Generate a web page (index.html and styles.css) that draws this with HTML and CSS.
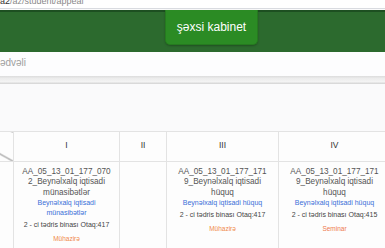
FILE: index.html
```html
<!DOCTYPE html>
<html lang="az">
<head>
    <meta charset="UTF-8">
    <meta name="viewport" content="width=device-width, initial-scale=1.0">
    <title>Dərs cədvəli</title>
    <link rel="stylesheet" href="styles.css">
</head>
<body>
    <div class="urlbar"><span class="url"><b>a2</b>/az/student/appeal</span></div>

    <header class="topnav">
        <a class="cabinet-btn" href="#">şəxsi kabinet</a>
    </header>

    <div class="page-title">Dərs cədvəli</div>
    <div class="title-shadow"></div>

    <main class="content">
        <table class="schedule">
            <colgroup>
                <col class="col-day">
                <col class="col-1">
                <col class="col-2">
                <col class="col-3">
                <col class="col-4">
            </colgroup>
            <thead>
                <tr>
                    <th class="corner"></th>
                    <th>I</th>
                    <th>II</th>
                    <th>III</th>
                    <th>IV</th>
                </tr>
            </thead>
            <tbody>
                <tr>
                    <td></td>
                    <td>
                        <div class="lesson">
                            <div class="code">AA_05_13_01_177_070<br>2_Beynəlxalq iqtisadi<br>münasibətlər</div>
                            <a class="subject" href="#">Beynəlxalq iqtisadi<br>münasibətlər</a>
                            <div class="room">2 - ci tədris binası Otaq:417</div>
                            <div class="type">Mühazirə</div>
                        </div>
                    </td>
                    <td></td>
                    <td>
                        <div class="lesson">
                            <div class="code">AA_05_13_01_177_171<br>9_Beynəlxalq iqtisadi<br>hüquq</div>
                            <a class="subject" href="#">Beynəlxalq iqtisadi hüquq</a>
                            <div class="room">2 - ci tədris binası Otaq:417</div>
                            <div class="type">Mühazirə</div>
                        </div>
                    </td>
                    <td>
                        <div class="lesson">
                            <div class="code">AA_05_13_01_177_171<br>9_Beynəlxalq iqtisadi<br>hüquq</div>
                            <a class="subject" href="#">Beynəlxalq iqtisadi hüquq</a>
                            <div class="room">2 - ci tədris binası Otaq:415</div>
                            <div class="type seminar">Seminar</div>
                        </div>
                    </td>
                </tr>
            </tbody>
        </table>
    </main>
</body>
</html>
```

FILE: styles.css
```css
body {
    font-family: 'Liberation Sans', Arial, sans-serif;
    margin: 0;
    padding: 0;
    width: 385px;
    height: 248px;
    overflow: hidden;
    background: #fafafb;
    color: #555555;
}
.urlbar {
    height: 8px;
    overflow: hidden;
    background: #ffffff;
    border-bottom: 1px solid #d9dbe0;
}
.url {
    display: block;
    margin-top: -5px;
    font-size: 9px;
    line-height: 12px;
    color: #8a8a8a;
}
.url b {
    font-weight: normal;
    color: #333333;
}
.topnav {
    height: 40px;
    margin-top: 1px;
    padding-left: 165px;
    background: #2c6a2e;
    border-top: 2px solid #1d4f21;
    display: flex;
    align-items: flex-start;
}
.cabinet-btn {
    width: 91px;
    height: 34px;
    margin-top: -2px;
    display: flex;
    align-items: center;
    justify-content: center;
    font-size: 12px;
    color: #ffffff;
    text-decoration: none;
    background: #2b8b24;
    border: 1px solid #257a1f;
    border-top: none;
    border-radius: 0 0 5px 5px;
    box-shadow: 0 1px 2px rgba(0, 0, 0, 0.25);
}
.page-title {
    height: 24px;
    background: #fdfdfe;
    font-size: 10px;
    line-height: 21px;
    text-indent: -29px;
    color: #a0a0a0;
}
.title-shadow {
    height: 8px;
    background: linear-gradient(#dcdcdc, #ececec 30%, #f3f3f3 70%, #d2d2d2);
}
.content {
    padding-top: 47px;
}
.schedule {
    margin-left: -40px;
    border-collapse: collapse;
    table-layout: fixed;
    width: 430px;
    background: #fdfdfd;
}
.col-day { width: 53px; }
.col-1 { width: 106px; }
.col-2 { width: 47px; }
.col-3 { width: 112px; }
.col-4 { width: 112px; }
.schedule th,
.schedule td {
    border: 1px solid #e3e3e3;
    text-align: center;
    vertical-align: top;
}
.schedule th {
    height: 29px;
    padding: 0;
    font-size: 8.5px;
    font-weight: normal;
    line-height: 26px;
    color: #333333;
}
.schedule th.corner {
    background: linear-gradient(to top right, transparent calc(50% - 1px), #8c8c8c 50%, transparent calc(50% + 1px));
}
.schedule td {
    height: 100px;
    padding: 5px 4px;
}
.code {
    font-size: 8.2px;
    line-height: 10.3px;
    color: #555555;
}
.subject {
    display: block;
    font-size: 7px;
    line-height: 10px;
    color: #3a6fd8;
    text-decoration: none;
}
.room {
    margin-top: 2px;
    font-size: 7px;
    line-height: 10px;
    color: #444444;
}
.type {
    margin-top: 4px;
    font-size: 6.5px;
    line-height: 10px;
    color: #f08a4b;
}
.type.seminar {
    color: #ee7b4e;
}
```
